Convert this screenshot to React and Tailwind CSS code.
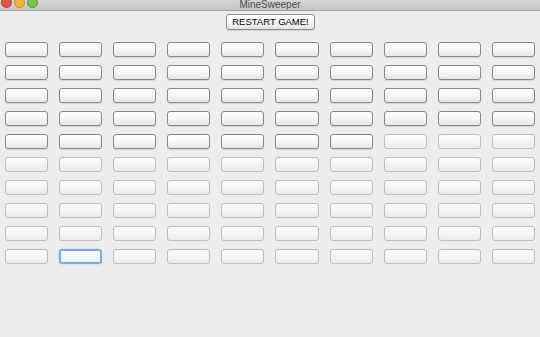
const ROWS = 10
const COLS = 10

function cellState(r, c) {
  if (r === 9 && c === 1) return 'focus'
  if (r < 4) return 'on'
  if (r === 4 && c < 7) return 'on'
  return 'off'
}

function Cell({ state }) {
  if (state === 'focus') {
    return (
      <div className="h-[15px] rounded-[3px] border-2 border-[#86a6d8] bg-gradient-to-b from-[#ffffff] to-[#e9f0fa] shadow-[0_0_2px_#b3c9ec]" />
    )
  }
  if (state === 'on') {
    return (
      <div className="h-[15px] rounded-[3px] border border-[#868686] bg-gradient-to-b from-[#ffffff] via-[#f7f7f7] to-[#e6e6e6] shadow-[0_1px_1px_rgba(0,0,0,0.1)]" />
    )
  }
  return (
    <div className="h-[15px] rounded-[3px] border border-[#bdbdbd] bg-gradient-to-b from-[#fcfcfc] via-[#f5f5f5] to-[#eaeaea]" />
  )
}

export default function App() {
  const cells = []
  for (let r = 0; r < ROWS; r++) {
    for (let c = 0; c < COLS; c++) {
      cells.push(<Cell key={`${r}-${c}`} state={cellState(r, c)} />)
    }
  }

  return (
    <div className="w-[540px] h-[337px] overflow-hidden bg-[#ededed] font-['Liberation_Sans',Arial,sans-serif]">
      {/* title bar */}
      <div className="relative h-[11px] bg-gradient-to-b from-[#d6d6d6] to-[#c6c6c6] border-b border-[#a0a0a0] flex items-start">
        <div className="flex gap-[2px] pl-[1px] -mt-[3px]">
          <span className="w-[11px] h-[11px] rounded-full bg-[#e0534d] border border-[#b23c38]" />
          <span className="w-[11px] h-[11px] rounded-full bg-[#efb23c] border border-[#c08b2c]" />
          <span className="w-[11px] h-[11px] rounded-full bg-[#7cc152] border border-[#569236]" />
        </div>
        <div className="absolute inset-x-0 top-0 text-center text-[10px] leading-[10px] text-[#4a4a4a]">
          MineSweeper
        </div>
      </div>

      {/* restart */}
      <div className="flex justify-center pt-[3px]">
        <button className="w-[89px] h-[16px] ml-[1px] rounded-[3px] border border-[#8a8a8a] bg-gradient-to-b from-[#ffffff] via-[#f6f6f6] to-[#e2e2e2] text-[9.5px] leading-[14px] text-black shadow-[0_1px_1px_rgba(0,0,0,0.12)]">
          RESTART GAME!
        </button>
      </div>

      {/* board */}
      <div className="grid grid-cols-10 gap-x-[11px] gap-y-[8px] px-[5px] pt-[12px]">
        {cells}
      </div>
    </div>
  )
}
